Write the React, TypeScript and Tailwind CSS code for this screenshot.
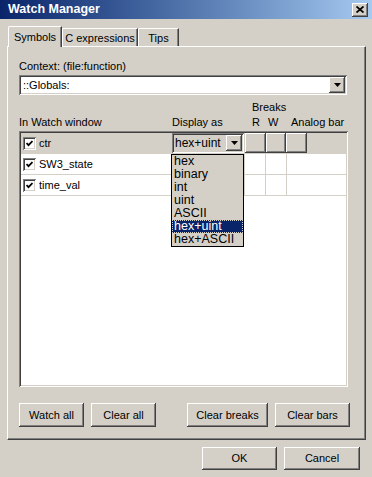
import React from 'react';

const raised =
  'bg-[#d4d0c8] shadow-[inset_-1px_-1px_#404040,inset_1px_1px_#ffffff,inset_-2px_-2px_#808080,inset_2px_2px_#d4d0c8]';
const sunken =
  'shadow-[inset_1px_1px_#808080,inset_-1px_-1px_#ffffff,inset_2px_2px_#404040,inset_-2px_-2px_#d4d0c8]';

function Arrow() {
  return (
    <svg width="7" height="4" viewBox="0 0 7 4">
      <polygon points="0,0 7,0 3.5,4" fill="#000" />
    </svg>
  );
}

function Check() {
  return (
    <div className={`w-[13px] h-[13px] bg-white flex items-center justify-center ${sunken}`}>
      <svg width="7" height="7" viewBox="0 0 7 7">
        <path d="M0.5 3 L2.5 5.2 L6.5 1" stroke="#000" strokeWidth="1.8" fill="none" />
      </svg>
    </div>
  );
}

function Button({ label, width }: { label: string; width: string }) {
  return (
    <div className={`${width} h-[24px] flex items-center justify-center ${raised}`}>
      <span>{label}</span>
    </div>
  );
}

const formats = ['hex', 'binary', 'int', 'uint', 'ASCII', 'hex+uint', 'hex+ASCII'];

export default function App() {
  return (
    <div
      className="w-[372px] h-[477px] bg-[#d4d0c8] overflow-hidden text-[11px] leading-[13px] text-black"
      style={{ fontFamily: '"Liberation Sans", Arial, sans-serif' }}
    >
      {/* Title bar */}
      <div className="h-[19px] flex items-center justify-between pl-[8px] pr-[4px] bg-gradient-to-r from-[#0a246a] to-[#a6caf0]">
        <span className="text-white font-bold text-[12.5px]">Watch Manager</span>
        <div className={`w-[16px] h-[14px] flex items-center justify-center ${raised}`}>
          <svg width="8" height="7" viewBox="0 0 8 7">
            <path d="M0.5 0.5 L7.5 6.5 M7.5 0.5 L0.5 6.5" stroke="#000" strokeWidth="1.8" />
          </svg>
        </div>
      </div>

      {/* Tabs */}
      <div className="flex items-end h-[20px] mt-[7px] pl-[8px]">
        <div className="relative z-10 w-[54px] h-[21px] -mb-[1px] bg-[#d4d0c8] border-t border-l border-white rounded-tl-[2px] shadow-[inset_-1px_0_#808080] border-r border-r-[#404040] flex items-start justify-center pt-[4px]">
          Symbols
        </div>
        <div className="w-[76px] h-[18px] bg-[#d4d0c8] border-t border-l border-white rounded-tl-[2px] border-r border-r-[#404040] shadow-[inset_-1px_0_#808080] flex items-start justify-center pt-[3px]">
          C expressions
        </div>
        <div className="w-[41px] h-[18px] bg-[#d4d0c8] border-t border-l border-white rounded-tl-[2px] border-r border-r-[#404040] shadow-[inset_-1px_0_#808080] flex items-start justify-center pt-[3px]">
          Tips
        </div>
      </div>

      {/* Tab panel */}
      <div className="ml-[7px] w-[359px] h-[394px] border-t border-l border-white border-r border-b border-r-[#404040] border-b-[#404040] shadow-[inset_-1px_-1px_#808080] pl-[11px] pt-[13px] flex flex-col">
        <div>Context: (file:function)</div>
        <div className={`mt-[2px] w-[328px] h-[20px] bg-white flex items-center justify-between pl-[4px] pr-[2px] ${sunken}`}>
          <span>::Globals:</span>
          <div className={`w-[16px] h-[16px] flex items-center justify-center ${raised}`}>
            <Arrow />
          </div>
        </div>

        <div className="mt-[6px] pl-[233px]">Breaks</div>
        <div className="mt-[2px] flex">
          <span className="w-[153px]">In Watch window</span>
          <span className="w-[80px]">Display as</span>
          <span className="w-[16px]">R</span>
          <span className="w-[23px]">W</span>
          <span>Analog bar</span>
        </div>

        {/* Watch list */}
        <div className={`relative mt-[2px] w-[329px] h-[256px] bg-white p-[2px] ${sunken}`}>
          {/* row 1 (selected) */}
          <div className="flex h-[21px] border-b border-[#d4d0c8] bg-[#d4d0c8]">
            <div className="w-[151px] flex items-center gap-[3px] pl-[2px]">
              <Check />
              <span>ctr</span>
            </div>
            <div className="w-[73px]">
              <div className={`w-[72px] h-[20px] flex items-center justify-between pl-[3px] pr-[2px] ${sunken}`}>
                <span className="text-[12px]">hex+uint</span>
                <div className={`w-[16px] h-[16px] flex items-center justify-center ${raised}`}>
                  <Arrow />
                </div>
              </div>
            </div>
            <div className={`w-[21px] h-[20px] ${raised}`} />
            <div className={`w-[20px] h-[20px] ${raised}`} />
            <div className={`w-[21px] h-[20px] ${raised}`} />
          </div>
          {['SW3_state', 'time_val'].map((name) => (
            <div key={name} className="flex h-[21px] border-b border-[#d4d0c8]">
              <div className="w-[151px] flex items-center gap-[3px] pl-[2px]">
                <Check />
                <span>{name}</span>
              </div>
              <div className="w-[73px] border-r border-[#d4d0c8]" />
              <div className="w-[21px] border-r border-[#d4d0c8]" />
              <div className="w-[21px] border-r border-[#d4d0c8]" />
            </div>
          ))}

          {/* open dropdown */}
          <div className="absolute left-[152px] top-[23px] w-[73px] h-[93px] border border-black bg-[#d4d0c8] flex flex-col">
            {formats.map((f) => (
              <div
                key={f}
                className={`h-[13px] pl-[2px] leading-[13px] text-[12.5px] ${
                  f === 'hex+uint' ? 'bg-[#0a246a] text-white outline-1 outline-dotted outline-[#d4d0c8] -outline-offset-1' : ''
                }`}
              >
                {f}
              </div>
            ))}
          </div>
        </div>

        <div className="mt-[16px] flex">
          <Button label="Watch all" width="w-[65px]" />
          <div className="ml-[7px]">
            <Button label="Clear all" width="w-[65px]" />
          </div>
          <div className="ml-[31px]">
            <Button label="Clear breaks" width="w-[81px]" />
          </div>
          <div className="ml-[7px]">
            <Button label="Clear bars" width="w-[75px]" />
          </div>
        </div>
      </div>

      {/* Dialog buttons */}
      <div className="mt-[7px] flex justify-end gap-[7px] pr-[12px]">
        <div className={`w-[75px] h-[23px] flex items-center justify-center ${raised}`}>OK</div>
        <div className={`w-[76px] h-[23px] flex items-center justify-center ${raised}`}>Cancel</div>
      </div>
    </div>
  );
}
